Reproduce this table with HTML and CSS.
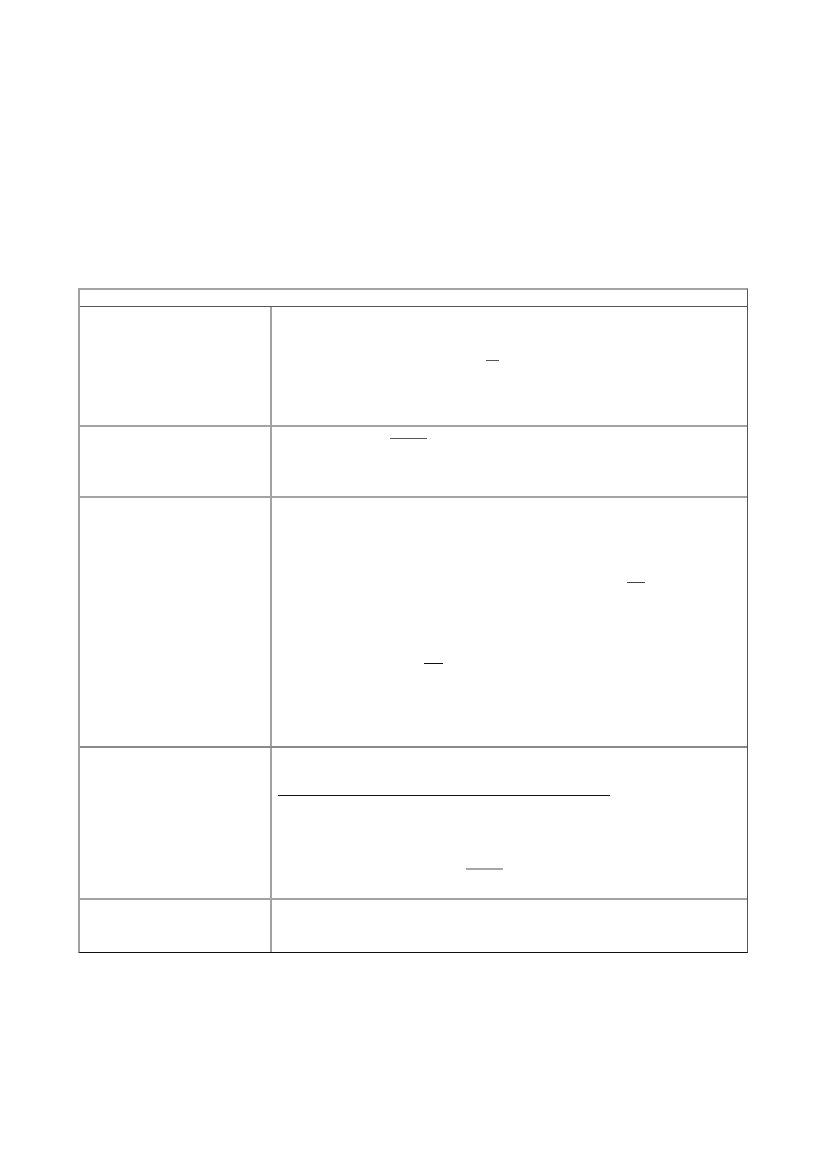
FILE: index.html
```html
<!DOCTYPE html>
<html lang="en">
<head>
<meta charset="utf-8">
<title>Form</title>
<link rel="stylesheet" href="styles.css">
</head>
<body>
<main class="page">
  <div class="form-table">
    <div class="head-row"></div>
    <div class="row row-1">
      <div class="label-cell"></div>
      <div class="value-cell">
        <span class="blank blank-a"></span>
      </div>
    </div>
    <div class="row row-2">
      <div class="label-cell"></div>
      <div class="value-cell">
        <span class="blank blank-b"></span>
      </div>
    </div>
    <div class="row row-3">
      <div class="label-cell"></div>
      <div class="value-cell">
        <span class="blank blank-c"></span>
        <span class="blank blank-d"></span>
      </div>
    </div>
    <div class="row row-4">
      <div class="label-cell"></div>
      <div class="value-cell">
        <span class="blank blank-e"></span>
        <span class="blank blank-f"></span>
      </div>
    </div>
    <div class="row row-5 last">
      <div class="label-cell"></div>
      <div class="value-cell"></div>
    </div>
  </div>
</main>
</body>
</html>
```

FILE: styles.css
```css
html, body {
  margin: 0;
  padding: 0;
  background: #ffffff;
  font-family: "Liberation Serif", serif;
}

.page {
  padding: 288px 0 0 78px;
}

.form-table {
  width: 670px;
  box-sizing: border-box;
  border-top: 2px solid #a3a3a3;
  border-left: 2px solid #a3a3a3;
  border-right: 1px solid #555555;
  border-bottom: 1px solid #111111;
  display: flex;
  flex-direction: column;
}

.head-row {
  height: 16px;
  border-bottom: 1px solid #555555;
}

.row {
  display: grid;
  grid-template-columns: 192px 1fr;
  border-bottom: 2px solid #a3a3a3;
}

.row.row-3 {
  border-bottom-color: #8a8a8a;
}

.row.last {
  border-bottom: none;
}

.row-1 { height: 118px; }
.row-2 { height: 69px; }
.row-3 { height: 248px; }
.row-4 { height: 150px; }
.row-5 { height: 52px; }

.label-cell {
  border-right: 2px solid #a3a3a3;
}

.value-cell {
  display: flex;
  flex-direction: column;
  align-items: flex-start;
}

.blank {
  display: block;
  height: 1px;
  background: #333333;
}

.blank-a { margin: 53px 0 0 214px; width: 13px; background: #555555; }
.blank-b { margin: 11px 0 0 118px; width: 37px; background: #555555; }
.blank-c { margin: 84px 0 0 355px; width: 18px; background: #444444; }
.blank-d { margin: 80px 0 0 152px; width: 19px; background: #111111; }
.blank-e { margin: 47px 0 0 6px; width: 332px; background: #111111; }
.blank-f { margin: 72px 0 0 194px; width: 37px; height: 2px; background: #a6a6a6; }
```
